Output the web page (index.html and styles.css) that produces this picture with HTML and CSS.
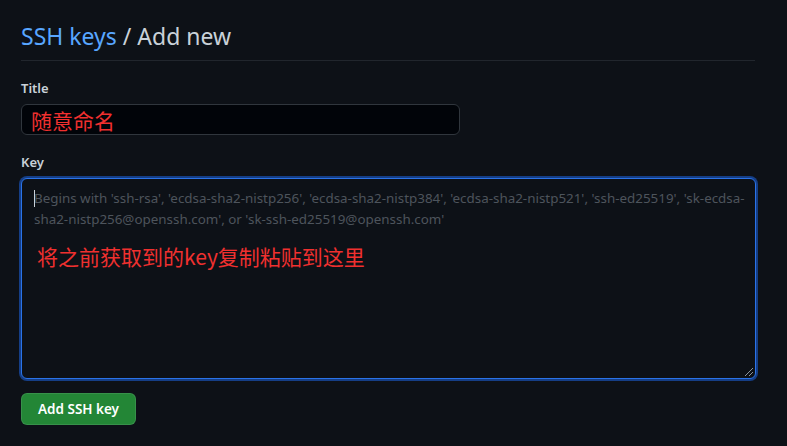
FILE: index.html
```html
<!DOCTYPE html>
<html lang="en">
<head>
<meta charset="utf-8">
<title>SSH keys / Add new</title>
<link rel="stylesheet" href="styles.css">
</head>
<body>
<main class="page">
  <div class="subhead">
    <h2 class="subhead-heading"><a class="crumb" href="#">SSH keys</a> / Add new</h2>
  </div>
  <form class="form">
    <div class="form-group">
      <label class="label">Title</label>
      <div class="input"><span class="note note-title">随意命名</span></div>
    </div>
    <div class="form-group">
      <label class="label">Key</label>
      <div class="textarea">
        <div class="placeholder"><span class="caret"></span><span class="line">Begins with 'ssh-rsa', 'ecdsa-sha2-nistp256', 'ecdsa-sha2-nistp384', 'ecdsa-sha2-nistp521', 'ssh-ed25519', 'sk-ecdsa-</span><span class="line">sha2-nistp256@openssh.com', or 'sk-ssh-ed25519@openssh.com'</span></div>
        <div class="note note-key">将之前获取到的key复制粘贴到这里</div>
        <span class="grip"></span>
      </div>
    </div>
    <button type="button" class="btn">Add SSH key</button>
  </form>
</main>
</body>
</html>
```

FILE: styles.css
```css
html, body {
  margin: 0;
  padding: 0;
  background: #0d1117;
}
body {
  font-family: "Noto Sans", "Open Sans", "Liberation Sans", sans-serif;
  color: #c9d1d9;
  width: 787px;
  height: 446px;
  overflow: hidden;
}
.page {
  padding: 0 32px 0 21px;
}
.subhead {
  padding-top: 18px;
  padding-bottom: 6px;
  border-bottom: 1px solid #21262d;
}
.subhead-heading {
  margin: 0;
  font-size: 23px;
  font-weight: 400;
  line-height: 36px;
  color: #c9d1d9;
}
.crumb {
  color: #58a6ff;
  text-decoration: none;
}
.form {
  display: flex;
  flex-direction: column;
  padding-top: 17px;
}
.form-group {
  display: flex;
  flex-direction: column;
  gap: 5px;
  margin-bottom: 17px;
}
.form-group + .form-group {
  margin-bottom: 14px;
}
.label {
  font-size: 13px;
  font-weight: 600;
  line-height: 21px;
  color: #c9d1d9;
}
.input {
  width: 439px;
  height: 31px;
  box-sizing: border-box;
  background: #010409;
  border: 1px solid #30363d;
  border-radius: 6px;
  padding: 0 9px;
  display: flex;
  align-items: center;
}
.note {
  font-family: "Noto Sans CJK SC", "Noto Sans", sans-serif;
  color: #f0302f;
  font-size: 21px;
  line-height: 28px;
}
.textarea {
  position: relative;
  width: 735px;
  height: 201px;
  box-sizing: border-box;
  background: #0d1117;
  border: 1px solid #2a73e8;
  border-radius: 6px;
  box-shadow: 0 0 0 2px #153e86;
  padding: 9px 12px;
}
.placeholder {
  position: relative;
  font-size: 13.4px;
  line-height: 21px;
  color: #4d545c;
}
.line {
  display: block;
  white-space: nowrap;
}
.caret {
  position: absolute;
  left: 0;
  top: 2px;
  width: 1px;
  height: 17px;
  background: #c9d1d9;
}
.note-key {
  margin-top: 12px;
  padding-left: 3px;
}
.grip {
  position: absolute;
  right: 2px;
  bottom: 2px;
  width: 8px;
  height: 8px;
  background: linear-gradient(135deg, transparent 45%, #8b949e 45%, #8b949e 52%, transparent 52%, transparent 70%, #8b949e 70%, #8b949e 77%, transparent 77%);
}
.btn {
  align-self: flex-start;
  width: 115px;
  height: 32px;
  background: #238636;
  color: #ffffff;
  border: 1px solid rgba(240, 246, 252, 0.1);
  border-radius: 6px;
  font-family: "Noto Sans", "Open Sans", sans-serif;
  font-size: 13.5px;
  font-weight: 600;
  padding: 0;
}
```
